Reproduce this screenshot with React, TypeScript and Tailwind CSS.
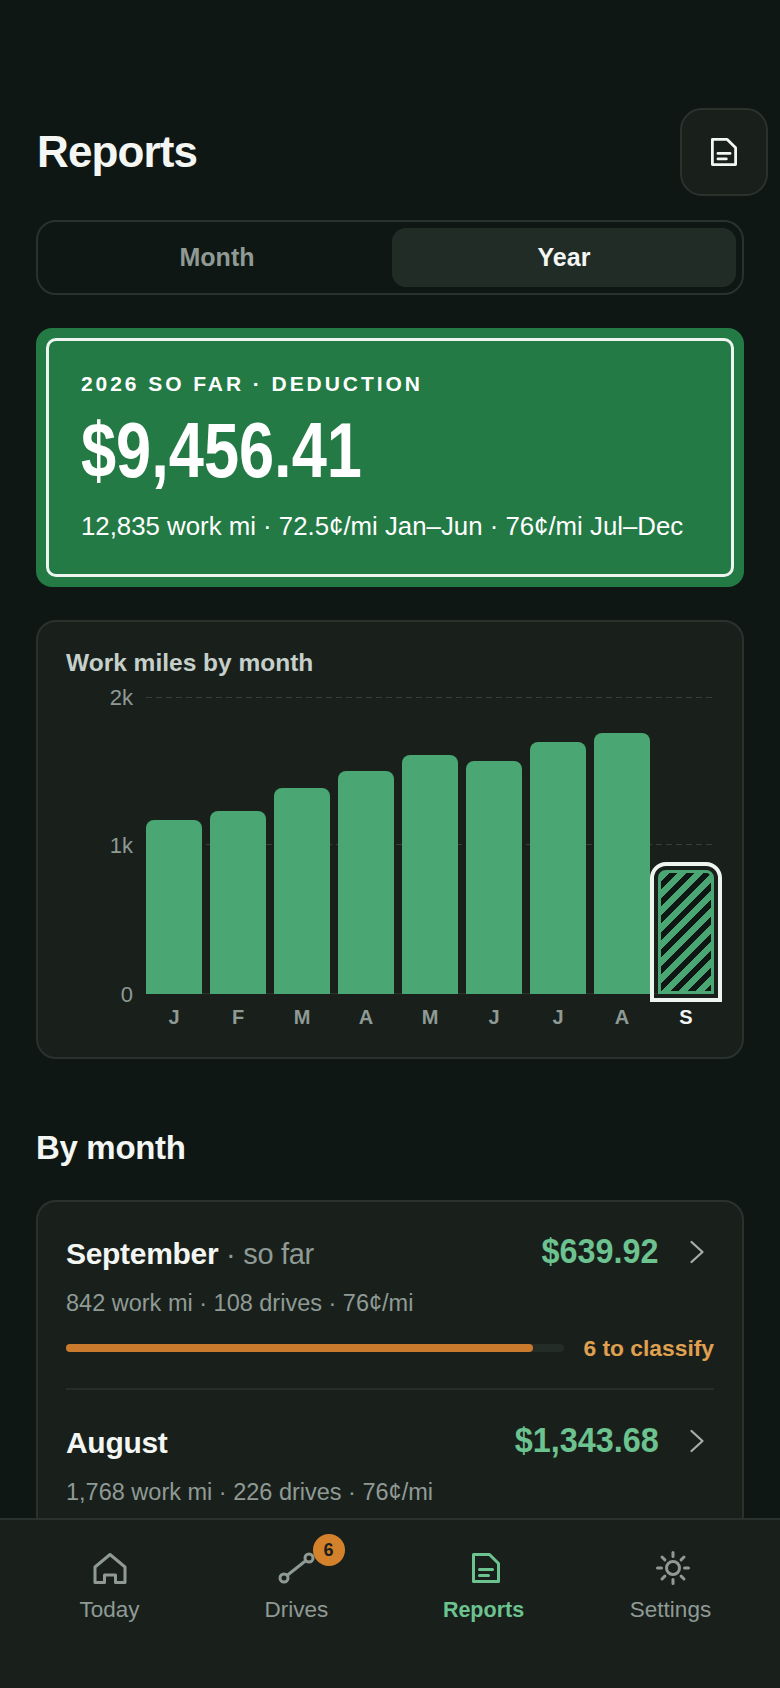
import React from 'react';

const bars = [
  { label: 'J', h: 174 },
  { label: 'F', h: 183 },
  { label: 'M', h: 206 },
  { label: 'A', h: 223 },
  { label: 'M', h: 239 },
  { label: 'J', h: 233 },
  { label: 'J', h: 252 },
  { label: 'A', h: 261 },
];

function DocIcon({ className }: { className?: string }) {
  return (
    <svg viewBox="0 0 28 30" fill="none" stroke="currentColor" strokeWidth="3" strokeLinejoin="round" strokeLinecap="round" className={className}>
      <path d="M1.5 1.5H17.5L26.5 10.5V28.5H1.5Z" />
      <path d="M7.5 16.5H20.5" />
      <path d="M7.5 22.5H16.5" />
    </svg>
  );
}

function HomeIcon() {
  return (
    <svg viewBox="0 0 36 36" fill="none" stroke="currentColor" strokeWidth="3" strokeLinejoin="round" className="w-9 h-9">
      <path d="M18 4.5L3 17V32.5H12.5V25H23.5V32.5H33V17Z" />
    </svg>
  );
}

function DrivesIcon() {
  return (
    <svg viewBox="0 0 36 36" fill="none" stroke="currentColor" strokeWidth="3" className="w-9 h-9 overflow-visible">
      <circle cx="6" cy="28" r="4" />
      <circle cx="31" cy="8" r="4" />
      <path d="M9 25.5L28 10.5" />
    </svg>
  );
}

function SunIcon() {
  return (
    <svg viewBox="0 0 36 36" fill="none" stroke="currentColor" strokeWidth="3" strokeLinecap="round" className="w-9 h-9">
      <circle cx="18" cy="18" r="6.5" />
      <path d="M18 2.5V6.5M18 29.5V33.5M2.5 18H6.5M29.5 18H33.5M7 7L9.9 9.9M26.1 26.1L29 29M7 29L9.9 26.1M26.1 9.9L29 7" />
    </svg>
  );
}

function Chevron() {
  return (
    <svg viewBox="0 0 16 24" fill="none" stroke="currentColor" strokeWidth="2.25" strokeLinecap="round" strokeLinejoin="round" className="w-4 h-6 ml-[30px] mr-[9px] text-[#a5afa9] -translate-y-0.5">
      <path d="M2.5 2L13.5 12L2.5 22" />
    </svg>
  );
}

function MonthRow({ name, note, amount, meta }: { name: string; note?: string; amount: string; meta: string }) {
  return (
    <div>
      <div className="flex items-center justify-between h-9">
        <div className="text-[30px] leading-9 font-bold tracking-[-0.01em] text-[#f3f6f3]">
          {name}
          {note && <span className="font-normal text-[29px] text-[#8f9a95]"> · {note}</span>}
        </div>
        <div className="flex items-center">
          <span className="text-[35px] leading-9 font-bold text-[#6cc38f] origin-right scale-x-[0.925] -translate-y-[3px]">{amount}</span>
          <Chevron />
        </div>
      </div>
      <div className="mt-[17px] text-[23.5px] leading-7 text-[#8f9a95]">{meta}</div>
    </div>
  );
}

export default function App() {
  return (
    <div className="w-[780px] h-[1688px] overflow-hidden flex flex-col bg-[#0f1714] font-['Liberation_Sans',sans-serif] text-[#f3f6f3]">
      <main className="flex-1 min-h-0 overflow-hidden px-9">
        <header className="pt-[108px] flex items-center justify-between">
          <h1 className="ml-px text-[44px] leading-none font-bold tracking-[-0.02em]">Reports</h1>
          <button className="-mr-6 w-[88px] h-[88px] rounded-[22px] border-2 border-[#2a322e] bg-[#19201c] flex items-center justify-center text-[#f3f6f3]">
            <DocIcon className="w-[26px] h-[28px]" />
          </button>
        </header>

        <div className="mt-6 h-[75px] rounded-[20px] border-2 border-[#2a322e] p-[6px] flex text-[25px] font-bold">
          <div className="flex-1 flex items-center justify-center text-[#8f9a95] pr-0.5">Month</div>
          <div className="w-[344px] flex items-center justify-center rounded-[14px] bg-[#222c27]">Year</div>
        </div>

        <section className="mt-[33px] h-[259px] rounded-[16px] bg-[#237a45] p-[10px]">
          <div className="h-full rounded-[10px] border-[3px] border-[#eef5f0] pl-[32px] pt-[31px] text-white">
            <div className="text-[21px] leading-6 font-bold tracking-[0.14em] whitespace-nowrap">2026 SO FAR · DEDUCTION</div>
            <div className="mt-[12px] text-[77px] leading-[84px] font-bold origin-left scale-x-[0.82] whitespace-nowrap">$9,456.41</div>
            <div className="mt-[18px] text-[25.8px] leading-8 whitespace-nowrap">12,835 work mi · 72.5¢/mi Jan–Jun · 76¢/mi Jul–Dec</div>
          </div>
        </section>

        <section className="mt-[33px] h-[439px] rounded-[20px] border-2 border-[#2a322e] bg-[#19201c] pl-7 pr-7 pt-[27px]">
          <h2 className="text-[24.5px] leading-7 font-bold text-[#c6d0ca] whitespace-nowrap">Work miles by month</h2>
          <div className="mt-5 flex">
            <div className="w-[67px] h-[297px] flex flex-col justify-between items-end text-[22px] text-[#8f9a95]">
              <span className="h-0 flex items-center">2k</span>
              <span className="h-0 flex items-center">1k</span>
              <span className="h-0 flex items-center">0</span>
            </div>
            <div className="ml-[13px] relative h-[297px] w-[568px] flex items-end gap-2">
              <div className="absolute left-0 right-0 top-0 h-px bg-[repeating-linear-gradient(90deg,#36403a_0px,#36403a_6px,transparent_6px,transparent_10px)]" />
              <div className="absolute left-0 right-0 top-[147px] h-px bg-[repeating-linear-gradient(90deg,#36403a_0px,#36403a_6px,transparent_6px,transparent_10px)]" />
              <div className="absolute left-0 right-0 bottom-0 h-px bg-[#2a322e]" />
              {bars.map((bar, i) => (
                <div key={i} className="relative w-14 rounded-t-[8px] bg-[#4aa672]" style={{ height: bar.h }} />
              ))}
              <div className="relative w-14 h-[124px] rounded-t-[8px] border-[3px] border-[#4aa672] bg-[repeating-linear-gradient(135deg,#4aa672_0px,#4aa672_6px,#0f1714_6px,#0f1714_12px)] outline-4 outline-offset-4 outline-[#eef5f0]">
              </div>
            </div>
          </div>
          <div className="mt-[9px] ml-[80px] flex gap-2 text-[20px] leading-7 font-bold text-[#8f9a95]">
            {bars.map((bar, i) => (
              <div key={i} className="w-14 text-center">{bar.label}</div>
            ))}
            <div className="w-14 text-center text-[#f3f6f3]">S</div>
          </div>
        </section>

        <h2 className="mt-[69px] text-[33px] leading-10 font-bold tracking-[-0.01em]">By month</h2>

        <section className="mt-8 rounded-t-[20px] border-2 border-[#2a322e] bg-[#19201c] px-7 pt-[34px] h-[400px]">
          <MonthRow name="September" note="so far" amount="$639.92" meta="842 work mi · 108 drives · 76¢/mi" />
          <div className="mt-[17px] flex items-center justify-between">
            <div className="w-[498px] h-2 rounded-full bg-[#242c28]">
              <div className="w-[467px] h-2 rounded-full bg-[#c97a2c]" />
            </div>
            <span className="text-[22.8px] leading-7 font-bold text-[#e0a050] whitespace-nowrap">6 to classify</span>
          </div>
          <div className="mt-[26px] border-t-2 border-[#262e2a]" />
          <div className="mt-[35px]">
            <MonthRow name="August" amount="$1,343.68" meta="1,768 work mi · 226 drives · 76¢/mi" />
          </div>
        </section>
      </main>

      <nav className="shrink-0 h-[170px] border-t-2 border-[#2a322e] bg-[#19201c] px-4 pt-[30px] flex text-[22.5px] text-[#8f9a95]">
        <div className="flex-1 flex flex-col items-center">
          <HomeIcon />
          <span className="mt-[10px] leading-7">Today</span>
        </div>
        <div className="flex-1 flex flex-col items-center">
          <div className="relative w-9 h-9 -translate-x-[1px]">
            <DrivesIcon />
            <span className="absolute left-[35px] -top-4 w-8 h-8 rounded-full bg-[#d4812b] flex items-center justify-center text-[18px] font-bold text-[#19201c]">6</span>
          </div>
          <span className="mt-[10px] leading-7">Drives</span>
        </div>
        <div className="flex-1 flex flex-col items-center text-[#6cc38f]">
          <div className="w-9 h-9 flex items-start justify-center pt-[3px] translate-x-0.5">
            <DocIcon className="w-[28px] h-[30px]" />
          </div>
          <span className="mt-[10px] leading-7 text-[21.5px] font-bold">Reports</span>
        </div>
        <div className="flex-1 flex flex-col items-center">
          <div className="translate-x-0.5">
            <SunIcon />
          </div>
          <span className="mt-[10px] leading-7">Settings</span>
        </div>
      </nav>
    </div>
  );
}
